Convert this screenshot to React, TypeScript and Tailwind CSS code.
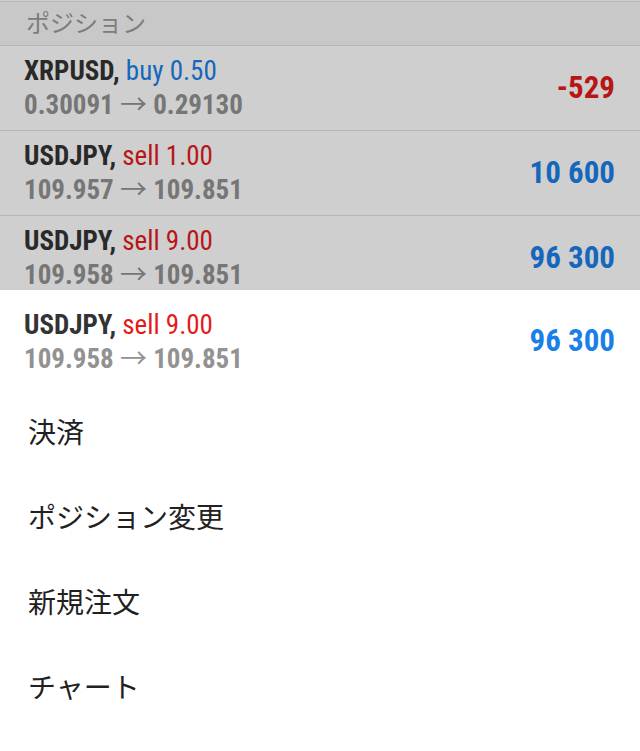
import React from 'react';

type Position = {
    symbol: string;
    side: 'buy' | 'sell';
    volume: string;
    open: string;
    current: string;
    profit: string;
};

const positions: Position[] = [
    { symbol: 'XRPUSD', side: 'buy', volume: '0.50', open: '0.30091', current: '0.29130', profit: '-529' },
    { symbol: 'USDJPY', side: 'sell', volume: '1.00', open: '109.957', current: '109.851', profit: '10 600' },
    { symbol: 'USDJPY', side: 'sell', volume: '9.00', open: '109.958', current: '109.851', profit: '96 300' },
];

const menuItems = ['決済', 'ポジション変更', '新規注文', 'チャート'];

const condensed = "font-['Roboto_Condensed','Roboto',sans-serif] font-stretch-condensed";

function PositionInfo({ p }: { p: Position }) {
    return (
        <div className={`${condensed} text-[27px] leading-[31px]`}>
            <div>
                <span className="font-bold text-[#333333]">{p.symbol},</span>{' '}
                <span className={p.side === 'buy' ? 'text-[#1b7fe8]' : 'text-[#e31b1b]'}>
                    {p.side} {p.volume}
                </span>
            </div>
            <div className="font-bold text-[#929292]">
                {p.open}{' '}
                <span className="font-['Noto_Sans_CJK_JP',sans-serif] font-normal">→</span>{' '}
                {p.current}
            </div>
        </div>
    );
}

function Profit({ value }: { value: string }) {
    const negative = value.startsWith('-');
    return (
        <div
            className={`${condensed} font-bold text-[31px] ${negative ? 'text-[#e31b1b]' : 'text-[#1b7fe8]'}`}
        >
            {value}
        </div>
    );
}

export default function App() {
    const selected = positions[2];

    return (
        <div className="relative h-[751px] w-full overflow-hidden bg-white">
            {/* Positions list */}
            <div className="pt-px">
                <div className="h-[45px] border-y border-[#e0e0e0] bg-[#f7f7f7] pl-[26px] flex items-center pb-1">
                    <span className="font-['Noto_Sans_CJK_JP',sans-serif] text-[24px] text-[#9a9a9a]">ポジション</span>
                </div>
                {positions.map((p, i) => (
                    <div
                        key={i}
                        className="h-[85px] border-b border-[#e0e0e0] flex items-center justify-between pl-6 pr-[25px]"
                    >
                        <PositionInfo p={p} />
                        <Profit value={p.profit} />
                    </div>
                ))}
            </div>

            {/* Backdrop */}
            <div className="absolute inset-0 bg-black/[0.19]" />

            {/* Context sheet */}
            <div className="absolute left-0 right-0 top-[290px] bottom-0 bg-white">
                <div className="h-[100px] pt-[20px] pl-6 pr-[25px] flex justify-between items-start">
                    <PositionInfo p={selected} />
                    <div className="h-[62px] flex items-center">
                        <Profit value={selected.profit} />
                    </div>
                </div>
                {menuItems.map((item) => (
                    <div
                        key={item}
                        className="h-[85px] flex items-center pl-7 pb-1 font-['Noto_Sans_CJK_JP',sans-serif] text-[28px] text-[#212121]"
                    >
                        {item}
                    </div>
                ))}
            </div>
        </div>
    );
}
